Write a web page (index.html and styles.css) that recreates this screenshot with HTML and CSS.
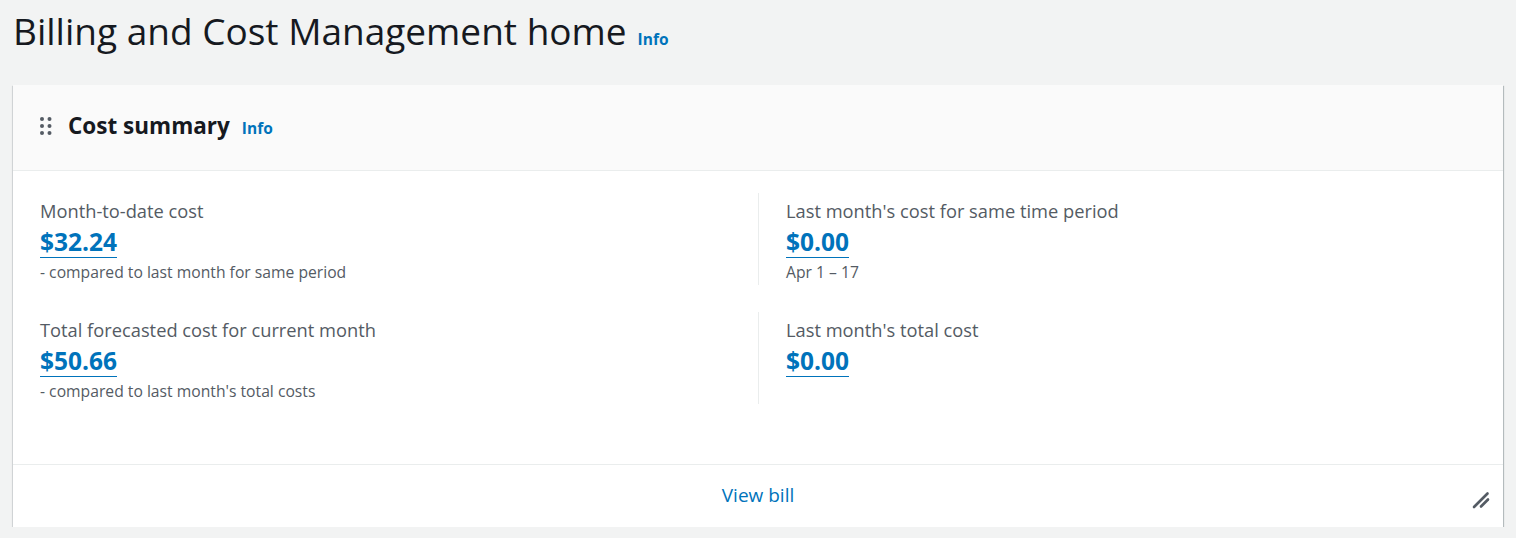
FILE: index.html
```html
<!DOCTYPE html>
<html>
<head>
<meta charset="utf-8">
<link rel="stylesheet" href="styles.css">
</head>
<body>
<div class="page">
  <div class="page-header">
    <h1 class="title">Billing and Cost Management home</h1>
    <a class="info info-lg" href="#">Info</a>
  </div>
  <section class="card">
    <header class="card-header">
      <span class="handle">
        <svg width="12" height="18" viewBox="0 0 12 18">
          <circle cx="2" cy="2" r="2" fill="#545b64"/>
          <circle cx="9.5" cy="2" r="2" fill="#545b64"/>
          <circle cx="2" cy="9" r="2" fill="#545b64"/>
          <circle cx="9.5" cy="9" r="2" fill="#545b64"/>
          <circle cx="2" cy="16" r="2" fill="#545b64"/>
          <circle cx="9.5" cy="16" r="2" fill="#545b64"/>
        </svg>
      </span>
      <div class="title-row">
        <h2 class="card-title">Cost summary</h2>
        <a class="info" href="#">Info</a>
      </div>
    </header>
    <div class="card-body">
      <div class="grid">
        <div class="cell">
          <div class="label">Month-to-date cost</div>
          <a class="value" href="#">$32.24</a>
          <div class="sub">- compared to last month for same period</div>
        </div>
        <div class="cell divided">
          <div class="label">Last month's cost for same time period</div>
          <a class="value" href="#">$0.00</a>
          <div class="sub">Apr 1 – 17</div>
        </div>
        <div class="cell">
          <div class="label">Total forecasted cost for current month</div>
          <a class="value" href="#">$50.66</a>
          <div class="sub">- compared to last month's total costs</div>
        </div>
        <div class="cell divided">
          <div class="label">Last month's total cost</div>
          <a class="value" href="#">$0.00</a>
        </div>
      </div>
    </div>
    <footer class="card-footer">
      <a class="view-bill" href="#">View bill</a>
      <span class="resize">
        <svg width="18" height="18" viewBox="0 0 18 18">
          <path d="M2 16 L15.5 2.5" stroke="#545b64" stroke-width="2.6" stroke-linecap="round"/>
          <path d="M9 15.5 L16 8.5" stroke="#545b64" stroke-width="2.6" stroke-linecap="round"/>
        </svg>
      </span>
    </footer>
  </section>
</div>
</body>
</html>
```

FILE: styles.css
```css
* { box-sizing: border-box; }
html, body { margin: 0; padding: 0; }
body {
  background: #f2f3f3;
  font-family: "Open Sans", "Noto Sans", sans-serif;
  color: #16191f;
}
.page {
  padding: 9px 13px 0 13px;
}
.page-header {
  display: flex;
  align-items: baseline;
  gap: 11px;
  height: 76px;
}
.title {
  margin: 0;
  font-weight: 400;
  font-size: 37px;
  line-height: 44px;
  color: #16191f;
}
.info {
  color: #0073bb;
  font-weight: 700;
  font-size: 15.5px;
  text-decoration: none;
}
.card {
  width: 1490px;
  background: #fff;
  box-shadow: 0 1px 1px 0 rgba(0,28,36,.4), 1px 1px 1px 0 rgba(0,28,36,.2), -1px 1px 1px 0 rgba(0,28,36,.08);
}
.card-header {
  background: #fafafa;
  height: 86px;
  border-bottom: 1px solid #eaeded;
  display: flex;
  align-items: center;
  padding: 0 0 5px 27px;
}
.handle {
  display: flex;
  width: 12px;
  margin-right: 16px;
  margin-top: 1px;
}
.title-row {
  display: flex;
  align-items: baseline;
  gap: 12px;
}
.card-title {
  margin: 0;
  font-size: 22.5px;
  font-weight: 700;
  color: #16191f;
}
.card-body {
  height: 294px;
  padding: 22px 27px 0 27px;
  border-bottom: 1px solid #eaeded;
}
.grid {
  display: grid;
  grid-template-columns: 718px 1fr;
  row-gap: 27px;
}
.cell {
  min-height: 92px;
  display: flex;
  flex-direction: column;
  align-items: flex-start;
}
.divided {
  border-left: 1px solid #eaeded;
  padding-left: 27px;
}
.label {
  font-size: 18.3px;
  line-height: 24px;
  color: #545b64;
  margin-top: 6px;
}
.value {
  font-size: 24.5px;
  font-weight: 700;
  line-height: 30px;
  margin-top: 4px;
  color: #0073bb;
  text-decoration: none;
  border-bottom: 1px solid #0073bb;
}
.sub {
  font-size: 15.7px;
  line-height: 20px;
  color: #545b64;
  margin-top: 4px;
}
.card-footer {
  position: relative;
  height: 62px;
  display: flex;
  align-items: center;
  justify-content: center;
}
.view-bill {
  color: #0073bb;
  font-size: 19px;
  text-decoration: none;
  margin-bottom: 2px;
}
.resize {
  position: absolute;
  right: 13px;
  bottom: 18px;
  display: flex;
}
```
